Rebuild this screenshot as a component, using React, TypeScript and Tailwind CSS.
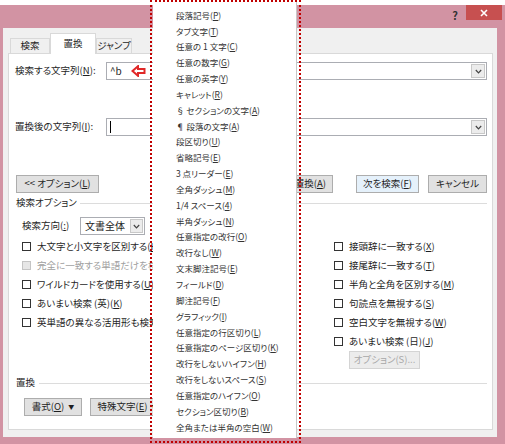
const menuItems: [string, string, string][] = [
  ["段落記号(", "P", ")"],
  ["タブ文字(", "T", ")"],
  ["任意の 1 文字(", "C", ")"],
  ["任意の数字(", "G", ")"],
  ["任意の英字(", "Y", ")"],
  ["キャレット(", "R", ")"],
  ["§ セクションの文字(", "A", ")"],
  ["¶ 段落の文字(", "A", ")"],
  ["段区切り(", "U", ")"],
  ["省略記号(", "E", ")"],
  ["3 点リーダー(", "E", ")"],
  ["全角ダッシュ(", "M", ")"],
  ["1/4 スペース(", "4", ")"],
  ["半角ダッシュ(", "N", ")"],
  ["任意指定の改行(", "O", ")"],
  ["改行なし(", "W", ")"],
  ["文末脚注記号(", "E", ")"],
  ["フィールド(", "D", ")"],
  ["脚注記号(", "F", ")"],
  ["グラフィック(", "I", ")"],
  ["任意指定の行区切り(", "L", ")"],
  ["任意指定のページ区切り(", "K", ")"],
  ["改行をしないハイフン(", "H", ")"],
  ["改行をしないスペース(", "S", ")"],
  ["任意指定のハイフン(", "O", ")"],
  ["セクション区切り(", "B", ")"],
  ["全角または半角の空白(", "W", ")"],
];

function Mn({ a, k, b }: { a: string; k: string; b: string }) {
  return (
    <span>
      {a}
      <span className="underline underline-offset-1">{k}</span>
      {b}
    </span>
  );
}

function Chevron() {
  return (
    <svg width="7" height="5" viewBox="0 0 7 5">
      <path d="M0.8 1 L3.5 3.8 L6.2 1" fill="none" stroke="#444" strokeWidth="1.2" />
    </svg>
  );
}

function Check({ children, disabled }: { children: React.ReactNode; disabled?: boolean }) {
  return (
    <div className={`flex h-[19px] items-center gap-[6px] ${disabled ? "text-[#a0a0a0]" : ""}`}>
      <div
        className={`h-[9px] w-[9px] shrink-0 border ${
          disabled ? "border-[#c4c4c4] bg-[#e6e6e6]" : "border-[#333] bg-white"
        }`}
      ></div>
      <span className="whitespace-nowrap">{children}</span>
    </div>
  );
}

function Btn({
  children,
  w,
  className = "",
}: {
  children: React.ReactNode;
  w: string;
  className?: string;
}) {
  return (
    <div
      className={`flex h-[18px] shrink-0 items-center justify-center whitespace-nowrap border border-[#adadad] bg-[#e1e1e1] ${w} ${className}`}
    >
      {children}
    </div>
  );
}

function Combo({ text, caret }: { text?: string; caret?: boolean }) {
  return (
    <div className="flex h-[18px] flex-1 items-center border border-[#abadb3] bg-white pl-[3px]">
      <span className="flex flex-1 items-center gap-[9px]">
        {caret && <span className="h-[12px] w-px bg-black"></span>}
        {text && <span className="text-[10px]">{text}</span>}
        {text && (
          <svg width="15" height="12" viewBox="0 0 15 12">
            <path
              d="M1.5 6 L7 1.2 L7 4 L13.5 4 L13.5 8 L7 8 L7 10.8 Z"
              fill="white"
              stroke="#e02828"
              strokeWidth="2"
              strokeLinejoin="miter"
            />
          </svg>
        )}
      </span>
      <div className="mr-px flex h-[14px] w-[14px] items-center justify-center border border-[#c8c8c8] bg-[#ececec]">
        <Chevron />
      </div>
    </div>
  );
}

export default function App() {
  return (
    <div className="relative h-[444px] w-[505px] overflow-hidden bg-white pt-[5px] font-['Noto_Sans_CJK_JP',sans-serif] text-[9.5px] leading-none text-[#1e1e1e] [font-feature-settings:'palt']">
      {/* window frame */}
      <div className="flex h-[439px] flex-col bg-[#d293a3] pl-[3px] pr-[8px]">
        {/* title bar */}
        <div className="flex h-[23px] shrink-0 items-start justify-end">
          <span className="mr-[8px] mt-[5px] text-[11px] font-bold text-[#333]">?</span>
          <div className="-mr-[5px] flex h-[15px] w-[36px] items-center justify-center bg-[#c75050]">
            <svg width="8" height="8" viewBox="0 0 8 8">
              <path d="M1 1 L7 7 M7 1 L1 7" stroke="white" strokeWidth="1.6" />
            </svg>
          </div>
        </div>

        {/* dialog body */}
        <div className="flex h-[409px] flex-col bg-[#f0f0f0] px-[5px]">
          {/* tabs */}
          <div className="relative z-10 flex h-[25px] shrink-0 items-end pl-[2px]">
            <div className="flex h-[15px] w-[40px] items-center justify-center border border-b-0 border-[#d9d9d9] bg-[#f0f0f0]">
              検索
            </div>
            <div className="-mb-px flex h-[21px] w-[46px] items-center justify-center border border-b-0 border-[#d9d9d9] bg-white">
              置換
            </div>
            <div className="flex h-[15px] w-[36px] items-center justify-center whitespace-nowrap border border-b-0 border-[#d9d9d9] bg-[#f0f0f0]">
              ジャンプ
            </div>
          </div>

          {/* tab panel */}
          <div className="flex h-[377px] w-[485px] flex-col border border-[#d9d9d9] bg-white pl-[6px] pr-[5px] pt-[8px]">
            <div className="flex h-[18px] items-center">
              <span className="w-[91px] whitespace-nowrap">
                <Mn a="検索する文字列(" k="N" b="):" />
              </span>
              <Combo text="^b" />
            </div>

            <div className="mt-[38px] flex h-[18px] items-center">
              <span className="w-[91px] whitespace-nowrap">
                <Mn a="置換後の文字列(" k="I" b="):" />
              </span>
              <Combo caret />
            </div>

            <div className="mt-[39px] flex h-[18px] items-center">
              <Btn w="w-[83px]" className="ml-px">
                <Mn a="<< オプション(" k="L" b=")" />
              </Btn>
              <div className="flex-1"></div>
              <Btn w="w-[64px]">
                <Mn a="置換(" k="R" b=")" />
              </Btn>
              <Btn w="w-[67px]" className="ml-[6px] justify-end pr-[6px]">
                <Mn a="すべて置換(" k="A" b=")" />
              </Btn>
              <Btn w="w-[63px]" className="ml-[23px] border-[#4f9ad6] bg-[#e5f1fb]">
                <Mn a="次を検索(" k="F" b=")" />
              </Btn>
              <Btn w="w-[59px]" className="ml-[9px]">
                キャンセル
              </Btn>
            </div>

            <div className="mt-[4px] flex h-[12px] items-center gap-[3px] pl-px">
              <span>検索オプション</span>
              <div className="h-px flex-1 bg-[#dcdcdc]"></div>
            </div>

            <div className="mt-[8px] flex h-[18px] items-center pl-[7px]">
              <span className="w-[58px]">
                <Mn a="検索方向(" k=":" b=")" />
              </span>
              <div className="flex h-[18px] w-[65px] items-center border border-[#abadb3] bg-white pl-[4px]">
                <span className="flex-1 text-[10px]">文書全体</span>
                <div className="mr-px flex h-[14px] w-[13px] items-center justify-center border border-[#c8c8c8] bg-[#ececec]">
                  <Chevron />
                </div>
              </div>
            </div>

            <div className="mt-[2px] flex pl-[7px]">
              <div className="w-[312px]">
                <Check>
                  <Mn a="大文字と小文字を区別する(" k="H" b=")" />
                </Check>
                <Check disabled>
                  <Mn a="完全に一致する単語だけを検索する(" k="Y" b=")" />
                </Check>
                <Check>
                  <Mn a="ワイルドカードを使用する(" k="U" b=")" />
                </Check>
                <Check>
                  <Mn a="あいまい検索 (英)(" k="K" b=")" />
                </Check>
                <Check>
                  <Mn a="英単語の異なる活用形も検索する(" k="W" b=")" />
                </Check>
              </div>
              <div>
                <Check>
                  <Mn a="接頭辞に一致する(" k="X" b=")" />
                </Check>
                <Check>
                  <Mn a="接尾辞に一致する(" k="T" b=")" />
                </Check>
                <Check>
                  <Mn a="半角と全角を区別する(" k="M" b=")" />
                </Check>
                <Check>
                  <Mn a="句読点を無視する(" k="S" b=")" />
                </Check>
                <Check>
                  <Mn a="空白文字を無視する(" k="W" b=")" />
                </Check>
                <Check>
                  <Mn a="あいまい検索 (日)(" k="J" b=")" />
                </Check>
                <Btn w="w-[71px]" className="ml-[15px] border-[#d4d4d4] bg-[#ececec] text-[#a8a8a8]">
                  オプション(S)...
                </Btn>
              </div>
            </div>

            <div className="mt-[8px] flex h-[12px] items-center gap-[4px] pl-px">
              <span>置換</span>
              <div className="h-px flex-1 bg-[#dcdcdc]"></div>
            </div>

            <div className="mt-[9px] flex h-[18px] items-center gap-[8px] pl-[9px]">
              <Btn w="w-[58px]" className="gap-[4px]">
                <Mn a="書式(" k="O" b=")" />
                <span className="text-[6px]">▼</span>
              </Btn>
              <Btn w="w-[75px]" className="gap-[4px]">
                <Mn a="特殊文字(" k="E" b=")" />
                <span className="text-[6px]">▼</span>
              </Btn>
              <Btn w="w-[70px]">
                <Mn a="書式の削除(" k="T" b=")" />
              </Btn>
            </div>
          </div>
        </div>
      </div>

      {/* popup menu of special characters */}
      <div className="absolute left-[153px] top-[2px] flex h-[436px] w-[144px] flex-col border-r border-[#c8c8c8] bg-white pt-[5px] text-[8.5px] text-[#333]">
        {menuItems.map(([a, k, b], i) => (
          <div key={i} className="flex h-[15.85px] shrink-0 items-center whitespace-nowrap pl-[23px]">
            <Mn a={a} k={k} b={b} />
          </div>
        ))}
      </div>

      {/* annotation */}
      <div className="pointer-events-none absolute left-[150px] top-0 h-[443px] w-[151px] border-2 border-dotted border-[#c00000]"></div>
    </div>
  );
}
